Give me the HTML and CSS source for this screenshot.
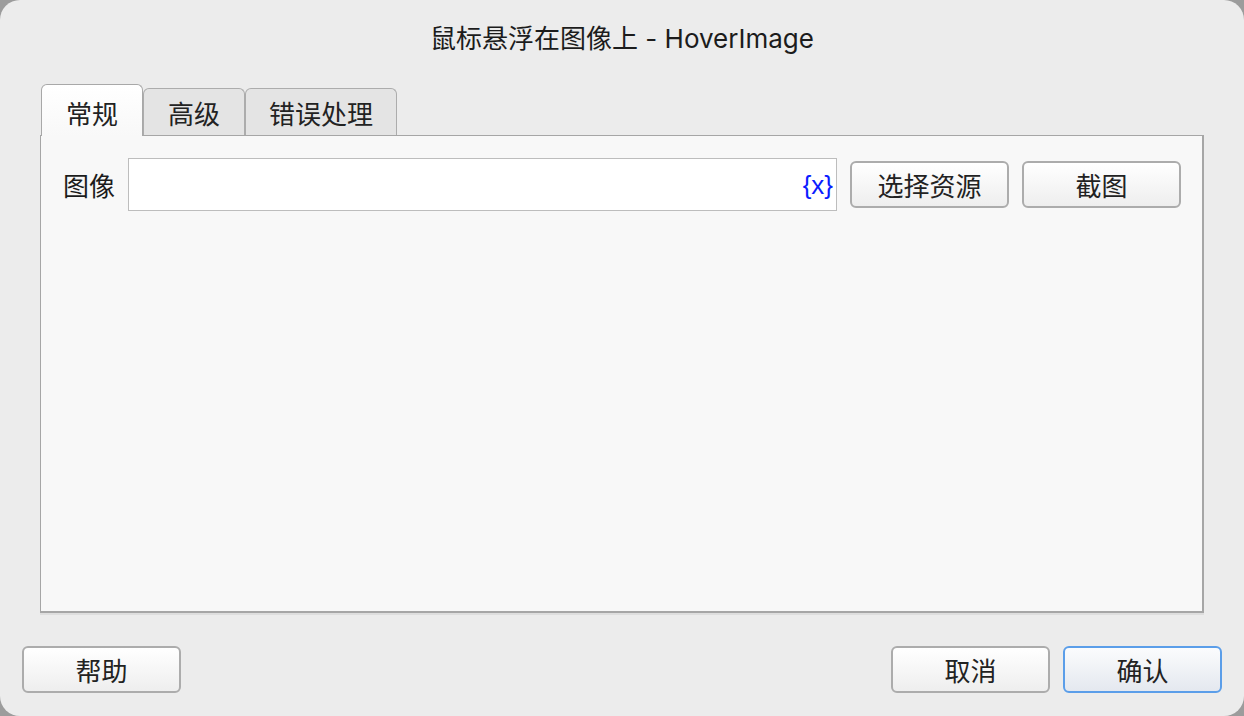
FILE: index.html
```html
<!DOCTYPE html>
<html lang="zh">
<head>
<meta charset="utf-8">
<title>HoverImage</title>
<link rel="stylesheet" href="styles.css">
</head>
<body>
<div class="window">
  <div class="titlebar">鼠标悬浮在图像上 - HoverImage</div>
  <div class="tabs">
    <div class="tab tab-active">常规</div>
    <div class="tab">高级</div>
    <div class="tab tab-wide">错误处理</div>
  </div>
  <div class="panel">
    <div class="row">
      <span class="label">图像</span>
      <div class="input"><span class="var">{x}</span></div>
      <button class="btn">选择资源</button>
      <button class="btn">截图</button>
    </div>
  </div>
  <div class="footer">
    <button class="btn">帮助</button>
    <div class="spacer"></div>
    <button class="btn">取消</button>
    <button class="btn btn-default">确认</button>
  </div>
</div>
</body>
</html>
```

FILE: styles.css
```css
html, body {
  margin: 0;
  padding: 0;
  background: #9c9c9c;
}
body {
  width: 1244px;
  height: 716px;
  overflow: hidden;
  font-family: "Noto Sans CJK SC", "Inter", sans-serif;
  color: #222;
}
.window {
  width: 1244px;
  height: 716px;
  background: #ececec;
  border-radius: 20px;
  display: flex;
  flex-direction: column;
  box-sizing: border-box;
}
.titlebar {
  height: 84px;
  box-sizing: border-box;
  padding-top: 22px;
  text-align: center;
  font-family: "Inter", "Noto Sans CJK SC", sans-serif;
  font-size: 26px;
  line-height: 34px;
  color: #1c1c1c;
}
.tabs {
  display: flex;
  align-items: flex-end;
  height: 51px;
  margin-left: 41px;
  position: relative;
  z-index: 2;
}
.tab {
  box-sizing: border-box;
  height: 47px;
  width: 102px;
  padding-top: 9px;
  font-size: 26px;
  line-height: 30px;
  text-align: center;
  background: #e4e4e4;
  border: 1px solid #acacac;
  border-bottom: none;
  border-radius: 6px 6px 0 0;
  color: #222;
}
.tab-wide {
  width: 152px;
}
.tab-active {
  height: 52px;
  margin-bottom: -1px;
  padding-top: 13px;
  background: linear-gradient(#ffffff, #f8f8f8);
  border-color: #a8a8a8;
}
.panel {
  margin-left: 40px;
  width: 1164px;
  height: 478px;
  box-sizing: border-box;
  background: #f8f8f8;
  border-style: solid;
  border-color: #a6a6a6;
  border-width: 1px 2px 2px 1px;
  box-shadow: 0 2px 0 #dedede;
  padding: 22px 21px 0 22px;
}
.row {
  display: flex;
  align-items: center;
}
.label {
  font-size: 26px;
  line-height: 30px;
  width: 65px;
  color: #1c1c1c;
}
.input {
  box-sizing: border-box;
  width: 709px;
  height: 53px;
  background: #fff;
  border: 1px solid #bdbdbd;
  display: flex;
  align-items: center;
  justify-content: flex-end;
  padding-right: 3px;
  margin-right: 13px;
}
.var {
  font-family: "Liberation Sans", sans-serif;
  font-size: 26px;
  color: #0a1cff;
  line-height: 30px;
}
.btn {
  box-sizing: border-box;
  width: 159px;
  height: 47px;
  font-family: "Noto Sans CJK SC", sans-serif;
  font-size: 26px;
  line-height: 30px;
  color: #222;
  background: linear-gradient(#ffffff, #eeeeee);
  border: 2px solid #acacac;
  border-radius: 6px;
  padding: 0;
}
.row .btn + .btn {
  margin-left: 13px;
}
.footer {
  display: flex;
  align-items: center;
  padding: 33px 22px 0 22px;
}
.spacer {
  flex: 1;
}
.footer .btn + .btn {
  margin-left: 13px;
}
.btn-default {
  border-color: #5b9ee9;
  background: linear-gradient(#fbfcfd, #e4e8ef);
}
```
